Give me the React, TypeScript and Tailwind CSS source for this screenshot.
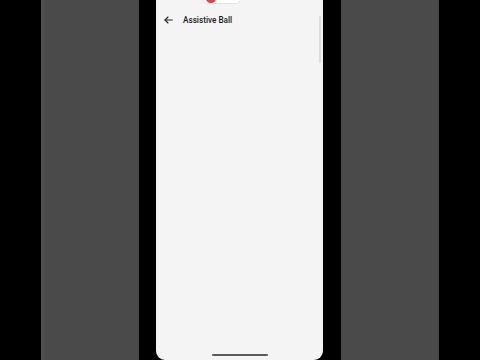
import React from 'react';

function BackArrow() {
  return (
    <svg width="9" height="8" viewBox="0 0 9 8" fill="none" stroke="#222" strokeWidth="1.1" strokeLinecap="round" strokeLinejoin="round">
      <path d="M8.3 4H1" />
      <path d="M4 1L1 4l3 3" />
    </svg>
  );
}

export default function App() {
  return (
    <div className="w-[480px] h-[360px] bg-black flex overflow-hidden" style={{ fontFamily: 'Roboto, "Liberation Sans", sans-serif' }}>
      <div className="w-[41px] shrink-0" />
      <div className="w-[98px] shrink-0 bg-[#4a4a4a] border-l-[4px] border-[#4f4f4f]" />
      <div className="w-[17px] shrink-0" />

      {/* phone screen */}
      <div className="relative w-[167px] shrink-0 h-[360px] bg-[#f4f4f4] rounded-b-[9px] flex flex-col">
        {/* top pill */}
        <div className="absolute left-[46px] top-[-6px] w-[39px] h-[10px] bg-white rounded-full border border-[#e4e4e4] flex items-center pl-[3px] overflow-hidden">
          <div className="w-[10px] h-[9px] rounded-full bg-[#e04848] mt-[-1px]" />
        </div>

        <div className="flex items-center h-[14px] mt-[13px] pl-[8px]">
          <BackArrow />
          <span className="ml-[10px] text-[8.2px] font-medium text-[#1a1a1a] leading-none">Assistive Ball</span>
        </div>

        {/* scrollbar */}
        <div className="absolute right-[2px] top-[16px] w-[2px] h-[47px] rounded-full bg-[#dcdcdc]" />

        <div className="flex-1" />
        <div className="flex justify-center pb-[4px]">
          <div className="w-[56px] h-[2px] rounded-full bg-[#5a5a5a]" />
        </div>
      </div>

      <div className="w-[18px] shrink-0" />
      <div className="w-[98px] shrink-0 bg-[#4a4a4a]" />
      <div className="flex-1" />
    </div>
  );
}
